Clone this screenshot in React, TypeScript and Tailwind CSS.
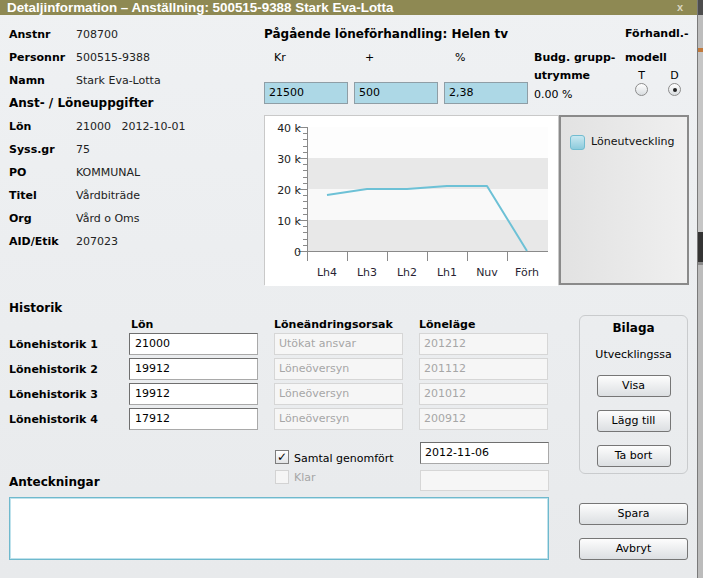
import React from 'react';

const info1 = [
  { label: 'Anstnr', value: '708700' },
  { label: 'Personnr', value: '500515-9388' },
  { label: 'Namn', value: 'Stark Eva-Lotta' },
];

const info2 = [
  { label: 'Lön', value: '21000\u00a0\u00a0\u00a02012-10-01' },
  { label: 'Syss.gr', value: '75' },
  { label: 'PO', value: 'KOMMUNAL' },
  { label: 'Titel', value: 'Vårdbiträde' },
  { label: 'Org', value: 'Vård o Oms' },
  { label: 'AID/Etik', value: '207023' },
];

const history = [
  { lon: '21000', orsak: 'Utökat ansvar', lage: '201212' },
  { lon: '19912', orsak: 'Löneöversyn', lage: '201112' },
  { lon: '19912', orsak: 'Löneöversyn', lage: '201012' },
  { lon: '17912', orsak: 'Löneöversyn', lage: '200912' },
];

function InfoRow({ label, value }: { label: string; value: string }) {
  return (
    <div className="flex h-[23px] items-center">
      <span className="w-[67px] font-bold">{label}</span>
      <span className="text-[#222]">{value}</span>
    </div>
  );
}

function BlueInput({ value }: { value: string }) {
  return (
    <div className="flex h-[22px] w-[84px] items-center border border-[#8f9ea6] bg-[#add8e6] pl-[4px] pt-[1px]">
      {value}
    </div>
  );
}

function Radio({ checked }: { checked?: boolean }) {
  return (
    <div className="flex h-[13px] w-[13px] items-center justify-center rounded-full border border-[#8c8c8c] bg-gradient-to-b from-[#ffffff] to-[#d9dde0]">
      {checked && <div className="h-[4px] w-[4px] rounded-full bg-[#222]" />}
    </div>
  );
}

function Btn({ label, wide }: { label: string; wide?: boolean }) {
  return (
    <div
      className={`flex h-[22px] items-center justify-center rounded-[3px] border border-[#767676] bg-gradient-to-b from-[#fdfdfd] to-[#dcdfe2] pt-[1px] ${wide ? 'w-[109px]' : 'w-[74px]'}`}
    >
      {label}
    </div>
  );
}

function Chart() {
  const pts = [
    [62, 79],
    [102, 73],
    [142, 73],
    [182, 70],
    [222, 70],
    [262, 135],
  ];
  const minor: number[] = [];
  for (let i = 0; i <= 20; i++) minor.push(135 - i * 6.2);
  const majors = [
    { y: 11, t: '40 k' },
    { y: 42, t: '30 k' },
    { y: 73, t: '20 k' },
    { y: 104, t: '10 k' },
    { y: 135, t: '0' },
  ];
  const cats = ['Lh4', 'Lh3', 'Lh2', 'Lh1', 'Nuv', 'Förh'];
  return (
    <svg width="293" height="170" className="block">
      <rect x="0" y="0" width="293" height="170" fill="#ffffff" />
      <rect x="42" y="11" width="241" height="31" fill="#fdfdfd" />
      <rect x="42" y="42" width="241" height="31" fill="#e8e8e8" />
      <rect x="42" y="73" width="241" height="31" fill="#f9f9f9" />
      <rect x="42" y="104" width="241" height="31" fill="#e8e8e8" />
      <line x1="42.5" y1="11" x2="42.5" y2="135" stroke="#8a8a8a" />
      <line x1="42" y1="135.5" x2="283" y2="135.5" stroke="#8a8a8a" />
      {minor.map((y, i) => (
        <line key={i} x1="38" y1={Math.round(y) + 0.5} x2="42" y2={Math.round(y) + 0.5} stroke="#8a8a8a" />
      ))}
      {majors.map(m => (
        <g key={m.t}>
          <line x1="33" y1={m.y + 0.5} x2="42" y2={m.y + 0.5} stroke="#8a8a8a" />
          <text x="36" y={m.y + 5} textAnchor="end" fontSize="11" fill="#222" fontFamily="DejaVu Sans, sans-serif">
            {m.t}
          </text>
        </g>
      ))}
      {[42, 82, 122, 162, 202, 242].map(x => (
        <line key={x} x1={x + 0.5} y1="135" x2={x + 0.5} y2="145" stroke="#8a8a8a" />
      ))}
      {cats.map((c, i) => (
        <text key={c} x={62 + i * 40} y="160" textAnchor="middle" fontSize="11" fill="#2a1f33" fontFamily="DejaVu Sans, sans-serif">
          {c}
        </text>
      ))}
      <polyline
        points={pts.map(p => p.join(',')).join(' ')}
        fill="none"
        stroke="#6dc1d6"
        strokeWidth="2"
        strokeLinejoin="round"
      />
    </svg>
  );
}

export default function App() {
  return (
    <div className="flex h-[578px] w-[703px] overflow-hidden font-['DejaVu_Sans',sans-serif] text-[11px] text-black">
      <div className="flex w-[697px] flex-col bg-gradient-to-b from-[#eff1f3] to-[#e8eaec]">
        {/* title bar */}
        <div className="flex h-[15px] items-center justify-between bg-[#8e8953] pl-[7px] pr-[14px] font-['Liberation_Sans',sans-serif] text-[13.4px] font-bold leading-none text-white">
          <span>Detaljinformation – Anställning: 500515-9388 Stark Eva-Lotta</span>
          <span className="text-[11px] text-[#d9d6c0]">x</span>
        </div>

        <div className="flex flex-col pl-[9px] pt-[7px]">
          {/* top */}
          <div className="flex">
            <div className="flex w-[255px] flex-col pt-[2px]">
              {info1.map(r => (
                <InfoRow key={r.label} {...r} />
              ))}
              <div className="flex h-[23px] items-center pb-[4px] text-[12px] font-bold">Anst- / Löneuppgifter</div>
              {info2.map(r => (
                <InfoRow key={r.label} {...r} />
              ))}
            </div>

            <div className="flex flex-col">
              <div className="flex h-[23px] items-center pt-[1px]">
                <span className="w-[361px] text-[12px] font-bold">Pågående löneförhandling: Helen tv</span>
                <span className="font-bold">Förhandl.-</span>
              </div>
              <div className="flex h-[23px] items-center pt-[3px]">
                <span className="w-[90px] pl-[10px]">Kr</span>
                <span className="w-[90px] pl-[11px]">+</span>
                <span className="w-[90px] pl-[11px]">%</span>
                <span className="w-[91px] font-bold">Budg. grupp-</span>
                <span className="font-bold">modell</span>
              </div>
              <div className="flex h-[36px]">
                <div className="w-[90px] pt-[14px]">
                  <BlueInput value="21500" />
                </div>
                <div className="w-[90px] pt-[14px]">
                  <BlueInput value="500" />
                </div>
                <div className="w-[90px] pt-[14px]">
                  <BlueInput value="2,38" />
                </div>
                <div className="flex w-[91px] flex-col">
                  <div className="flex h-[15px] items-center pt-[1px] font-bold">utrymme</div>
                  <div className="flex h-[21px] items-center pt-[3px]">0.00 %</div>
                </div>
                <div className="flex gap-[20px] pl-[10px]">
                  <div className="flex w-[13px] flex-col items-center">
                    <div className="flex h-[15px] items-center pt-[1px]">T</div>
                    <Radio />
                  </div>
                  <div className="flex w-[13px] flex-col items-center">
                    <div className="flex h-[15px] items-center pt-[1px]">D</div>
                    <Radio checked />
                  </div>
                </div>
              </div>

              <div className="mt-[11px] flex h-[170px] w-[425px]">
                <div className="border border-[#c9c9c9] bg-white">
                  <Chart />
                </div>
                <div className="flex-1 border-2 border-[#8a8a8a] bg-gradient-to-r from-[#e2e2e2] to-[#efefef] pl-[9px] pt-[17px]">
                  <div className="flex items-center gap-[6px]">
                    <div className="h-[15px] w-[15px] rounded-[3px] border border-[#72bcd0] bg-gradient-to-b from-[#c9e8f1] to-[#8ccbdc]" />
                    <span className="text-[#111]">Löneutveckling</span>
                  </div>
                </div>
              </div>
            </div>
          </div>

          {/* history */}
          <div className="mt-[12px] flex">
            <div className="flex w-[540px] flex-col">
              <div className="flex h-[18px] items-center pt-[3px] text-[12px] font-bold">Historik</div>
              <div className="flex h-[18px] items-center pt-[2px] font-bold">
                <span className="w-[121px]" />
                <span className="w-[144px] pl-[1px]">Lön</span>
                <span className="w-[145px]">Löneändringsorsak</span>
                <span>Löneläge</span>
              </div>
              <div className="flex flex-col gap-[3px]">
                {history.map((h, i) => (
                  <div key={i} className="flex h-[22px] items-center">
                    <span className="w-[120px] pt-[2px] font-bold">Lönehistorik {i + 1}</span>
                    <div className="flex h-[22px] w-[129px] items-center border border-[#6f6f6f] border-b-[#a9a9a9] border-r-[#a9a9a9] bg-white pl-[5px] pt-[1px]">
                      {h.lon}
                    </div>
                    <div className="ml-[16px] flex h-[22px] w-[129px] items-center border border-[#d6d6d6] bg-[#f6f6f6] pl-[4px] pt-[1px] text-[#a6a6a6]">
                      {h.orsak}
                    </div>
                    <div className="ml-[16px] flex h-[22px] w-[129px] items-center border border-[#d6d6d6] bg-[#f6f6f6] pl-[4px] pt-[1px] text-[#a6a6a6]">
                      {h.lage}
                    </div>
                  </div>
                ))}
              </div>

              <div className="mt-[12px] flex h-[22px]">
                <span className="w-[266px]" />
                <div className="flex w-[145px] items-end gap-[5px]">
                  <div className="flex h-[14px] w-[14px] items-center justify-center border border-[#7d7d7d] bg-gradient-to-b from-[#ffffff] to-[#e2e4e6] text-[12px] leading-none">
                    ✓
                  </div>
                  <span className="translate-y-[2px] leading-[14px]">Samtal genomfört</span>
                </div>
                <div className="flex h-[22px] w-[129px] items-center border border-[#6f6f6f] border-b-[#a9a9a9] border-r-[#a9a9a9] bg-white pl-[4px]">
                  2012-11-06
                </div>
              </div>

              <div className="mt-[6px] flex h-[21px]">
                <div className="flex w-[266px] items-end text-[12px] font-bold leading-[14px]">
                  <span className="-translate-y-[2px]">Anteckningar</span>
                </div>
                <div className="flex w-[145px] items-start gap-[5px]">
                  <div className="h-[14px] w-[14px] border border-[#d3d3d3] bg-[#f5f5f5]" />
                  <span className="translate-y-[1px] leading-[14px] text-[#a6a6a6]">Klar</span>
                </div>
                <div className="h-[21px] w-[129px] border border-[#d6d6d6] bg-[#f6f6f6]" />
              </div>

              <div className="mt-[6px] h-[63px] w-[540px] border border-[#6fb9cd] bg-white shadow-[inset_0_0_0_1px_#bfe2ec]" />
            </div>

            <div className="ml-[30px] flex w-[109px] flex-col pt-[18px]">
              <div className="flex h-[159px] flex-col items-center rounded-[6px] border border-[#c9cbcd] pt-[3px]">
                <div className="flex h-[16px] items-center pt-[1px] text-[12px] font-bold">Bilaga</div>
                <div className="mt-[11px] flex h-[16px] items-center pt-[2px]">Utvecklingssa</div>
                <div className="mt-[13px] flex flex-col gap-[13px]">
                  <Btn label="Visa" />
                  <Btn label="Lägg till" />
                  <Btn label="Ta bort" />
                </div>
              </div>
              <div className="mt-[29px] flex flex-col gap-[13px]">
                <Btn label="Spara" wide />
                <Btn label="Avbryt" wide />
              </div>
            </div>
          </div>
        </div>
      </div>

      {/* background strip behind the dialog */}
      <div className="flex w-[6px] flex-col border-l border-[#7a7a7a]">
        <div className="h-[15px] bg-[#4d4d4d]" />
        <div className="h-[33px] bg-[#bdbdbd]" />
        <div className="h-[4px] bg-[#c27a3c]" />
        <div className="h-[180px] bg-[#c6c6c6]" />
        <div className="h-[30px] bg-[#343434]" />
        <div className="h-[3px] bg-[#8a8a8a]" />
        <div className="flex-1 bg-[#bcbcbc]" />
      </div>
    </div>
  );
}
